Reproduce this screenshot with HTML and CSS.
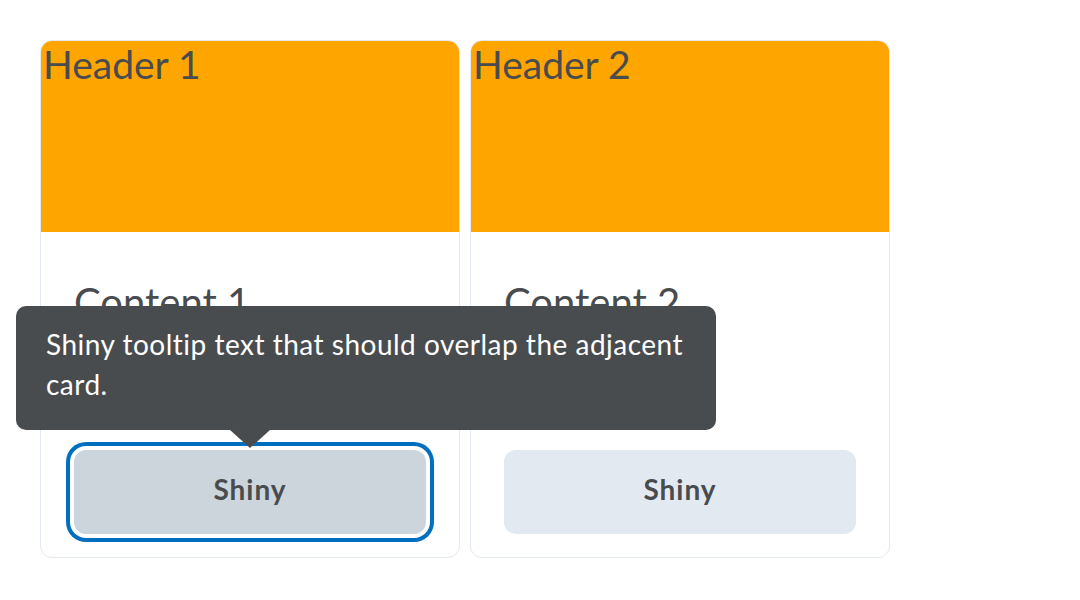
FILE: index.html
```html
<!DOCTYPE html>
<html>
<head>
<meta charset="utf-8">
<link rel="stylesheet" href="styles.css">
</head>
<body>
<div class="page">
  <div class="cards">
    <div class="card">
      <div class="card-header">Header 1</div>
      <div class="card-content">Content 1</div>
      <div class="card-footer">
        <button class="btn btn-focus">Shiny</button>
      </div>
    </div>
    <div class="card">
      <div class="card-header">Header 2</div>
      <div class="card-content">Content 2</div>
      <div class="card-footer">
        <button class="btn">Shiny</button>
      </div>
    </div>
  </div>
  <div class="tooltip">Shiny tooltip text that should overlap the adjacent card.</div>
</div>
</body>
</html>
```
FILE: styles.css
```css
html, body {
  margin: 0;
  padding: 0;
  background: #ffffff;
}
body {
  font-family: Lato, "Noto Sans", sans-serif;
  color: #494c4e;
}
.page {
  position: relative;
  width: 1080px;
  height: 600px;
  padding: 40px;
  box-sizing: border-box;
}
.cards {
  display: flex;
  gap: 10px;
}
.card {
  width: 420px;
  height: 518px;
  box-sizing: border-box;
  border: 1px solid #e3e9f1;
  border-radius: 12px;
  display: flex;
  flex-direction: column;
  overflow: hidden;
}
.card-header {
  height: 191px;
  background: #ffa500;
  font-size: 39px;
  line-height: normal;
  padding-left: 2px;
  flex: none;
}
.card-content {
  padding: 46px 33px 0;
  font-size: 40px;
  line-height: 48px;
}
.card-footer {
  margin-top: auto;
  padding: 0 33px 23px;
}
.btn {
  display: flex;
  align-items: center;
  justify-content: center;
  width: 352px;
  height: 84px;
  border: none;
  border-radius: 12px;
  background: #e3e9f1;
  color: #494c4e;
  font-family: Lato, "Noto Sans", sans-serif;
  font-weight: 700;
  font-size: 28px;
  letter-spacing: 1px;
  padding: 0 0 6px;
  margin: 0;
}
.btn-focus {
  background: #cdd5dc;
  box-shadow: 0 0 0 4px #ffffff, 0 0 0 8px #006fbf;
}
.tooltip {
  position: absolute;
  left: 16px;
  top: 306px;
  width: 700px;
  box-sizing: border-box;
  padding: 18px 30px 26px;
  background: #494c4e;
  color: #ffffff;
  border-radius: 10px;
  font-size: 28px;
  line-height: 40px;
  letter-spacing: 0.5px;
}
.tooltip::after {
  content: "";
  position: absolute;
  left: 214px;
  top: 100%;
  border-left: 20px solid transparent;
  border-right: 20px solid transparent;
  border-top: 18px solid #494c4e;
}
```
